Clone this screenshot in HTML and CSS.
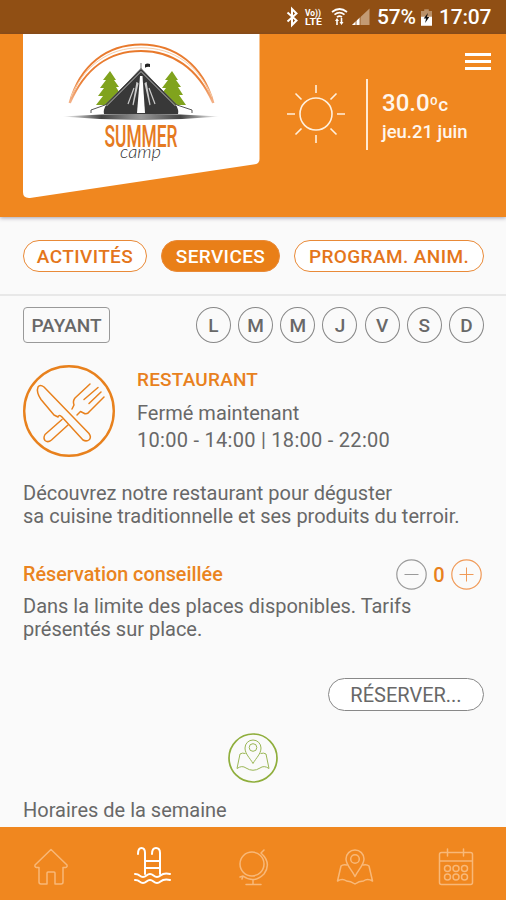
FILE: index.html
```
<!DOCTYPE html>
<html lang="fr">
<head>
    <meta charset="UTF-8">
    <meta name="viewport" content="width=device-width, initial-scale=1.0">
    <title>Summer Camp - Services</title>
    <link rel="stylesheet" href="styles.css">
</head>
<body>
    <div class="app">
        <div class="status">
            <svg class="status-icons" width="88" height="34" viewBox="0 0 88 34">
                <!-- bluetooth -->
                <path d="M2.500 12.500l9 8-4.500 4.500v-16l4.500 4.500-9 8" fill="none" stroke="#fff" stroke-width="2"/>
                <text class="tiny" x="20" y="16" textLength="16" lengthAdjust="spacingAndGlyphs">Vo))</text>
                <text class="tiny" x="20" y="25" textLength="17" lengthAdjust="spacingAndGlyphs">LTE</text>
                <!-- wifi -->
                <g fill="none" stroke="#fff" stroke-width="1.700">
                    <path d="M47 12q7.500-6 15 0"/>
                    <path d="M49.500 14.700q5-4 10 0"/>
                    <path d="M52 17.200q2.500-2 5 0"/>
                </g>
                <path d="M52 18l2 3h-1.200v4h-1.600v-4H50zM56.500 25l-2-3h1.200v-4h1.600v4h1.200z" fill="#fff"/>
                <!-- reseau -->
                <path d="M67 25L84.500 8.500V25z" fill="#c39b74"/>
                <path d="M67 25l8-7.500V25z" fill="#fff"/>
                <path d="M71 18v8M75 14v12" stroke="#904f14" stroke-width=".8"/>
            </svg>
            <span class="percent">57%</span>
            <svg class="battery" width="11" height="17" viewBox="0 0 12 18">
                <path d="M3.500 0h5v2H12v6H0V2h3.500z" fill="#b99068"/>
                <path d="M0 8h12v10H0z" fill="#fff"/>
                <path d="M7.500 4L3 10h2.500L4.500 15 9 8.500H6.500z" fill="#111"/>
            </svg>
            <span class="clock">17:07</span>
        </div>

        <div class="header">
            <svg class="logo" width="237" height="165" viewBox="23 34 237 165">
                <defs>
                    <linearGradient id="ground" x1="0" x2="1">
                        <stop offset="0" stop-color="#444" stop-opacity="0"/>
                        <stop offset=".25" stop-color="#444"/>
                        <stop offset=".5" stop-color="#999"/>
                        <stop offset=".75" stop-color="#444"/>
                        <stop offset="1" stop-color="#444" stop-opacity="0"/>
                    </linearGradient>
                    <linearGradient id="arc" x1="0" x2="0" y1="0" y2="1">
                        <stop offset="0" stop-color="#e8792b"/>
                        <stop offset=".6" stop-color="#ea8038"/>
                        <stop offset="1" stop-color="#f4b48c"/>
                    </linearGradient>
                    <path id="tree" d="M0 0L6 9 4 9 9 16 6 16 11 24 7 24 14 34H-14L-7 25-12 25-6 17-10 17-4 9-7 9z" fill="#80a31d"/>
                </defs>
                <path d="M23 34H259.500V159Q259.500 163.500 255 164.300L30 197.900Q23 198.500 23 192z" fill="#fff"/>
                <g fill="none" stroke="url(#arc)" stroke-width="1.900">
                    <path d="M69.500 103C80 65 107 44.500 141 44.500S203 65 213.500 103"/>
                    <path d="M70 103C85 68 110 51 141 51S198 68 213 103"/>
                </g>
                <path d="M71 97C84 66 108 47.700 141 47.700S199 66 212 97" fill="none" stroke="#f6cda9" stroke-width="1"/>
                <use href="#tree" x="110" y="71"/>
                <use href="#tree" x="172" y="71"/>
                <path d="M62 116.500Q141 111 220 116.500Q141 123.500 62 116.500z" fill="url(#ground)"/>
                <path d="M104 114Q103 110 106 105L141 68 176 105Q179 110 178 114z" fill="#383838"/>
                <path d="M91 113v-3L105 105 141 69l36 36 15 5v3" fill="none" stroke="#555" stroke-width="1"/>
                <path d="M106.500 106L141 71.500 175.500 106" fill="none" stroke="#ddd" stroke-width=".8"/>
                <path d="M140 76h2.500L145 113h-8z" fill="#fff"/>
                <path d="M137 82l-4 23 5-22M134 88l-6 16M146 82l4 23-5-22M149 88l6 16" fill="none" stroke="#ccc" stroke-width="1.200"/>
                <path d="M141 70v-7" stroke="#777" stroke-width="1"/>
                <path d="M145 64.500q2-1.500 5-.5v3q-3-.5-5 .7z" fill="#222"/>
                <text class="logo-name" x="104.500" y="146.500" textLength="73" lengthAdjust="spacingAndGlyphs">SUMMER</text>
                <text class="logo-sub" x="120" y="158" textLength="41" lengthAdjust="spacingAndGlyphs">camp</text>
            </svg>
            <svg class="sun" width="60" height="60" viewBox="-30 -30 60 60">
                <g fill="none" stroke="#fff0dd" stroke-width="1.600">
                    <circle r="16"/>
                    <path d="M0-29v8M0 29v-8M-29 0h8M29 0h-8M-20.500-20.500l6 6M20.500-20.500l-6 6M-20.500 20.500l6-6M20.500 20.500l-6-6"/>
                </g>
            </svg>
            <div class="weather">
                <div class="temp">30.0<small>ºc</small></div>
                <div class="date">jeu.21 juin</div>
            </div>
            <div class="burger"><i></i><i></i><i></i></div>
        </div>

        <div class="tabs">
            <a class="tab tab-1">ACTIVITÉS</a>
            <a class="tab tab-2 active">SERVICES</a>
            <a class="tab tab-3">PROGRAM. ANIM.</a>
        </div>

        <div class="content">
            <div class="row-days">
                <span class="badge">PAYANT</span>
                <div class="days">
                    <span>L</span>
                    <span>M</span>
                    <span>M</span>
                    <span>J</span>
                    <span>V</span>
                    <span>S</span>
                    <span>D</span>
                </div>
            </div>

            <div class="service">
                <svg width="92" height="92" viewBox="0 0 92 92" fill="none" stroke="#e8811d" stroke-width="1.500" stroke-linejoin="round" stroke-linecap="round">
                    <circle cx="46" cy="46" r="44.800" stroke-width="2.400"/>
                    <!-- couteau -->
                    <path d="M15 22Q17 19 21 22L66 68.500Q68.500 72 66.500 74.500 63.500 77 60 75L38.500 51.500Q35.500 49.500 35 52L31 50 18 34.500Q13 27 15 22z"/>
                    <!-- fourchette -->
                    <path d="M39 54.500L22 69.500Q20 73 22 75.500 25 78 28.500 75L45 60"/>
                    <path d="M67 19L52 33Q49.500 36 51 40L49 44M75 22.500L61 34.500M78 27L66 38.500M81 32L66.500 46.500Q64 50 60.500 48L57.500 46.500 54 50"/>
                </svg>
                <div class="service-text">
                    <h2>RESTAURANT</h2>
                    <p class="state">Fermé maintenant</p>
                    <p class="hours">10:00 - 14:00 | 18:00 - 22:00</p>
                </div>
            </div>

            <p class="desc">Découvrez notre restaurant pour déguster<br>sa cuisine traditionnelle et ses produits du terroir.</p>

            <div class="booking">
                <h3>Réservation conseillée</h3>
                <div class="counter">
                    <svg width="31" height="31" viewBox="0 0 31 31" fill="none" stroke="#9a9a9a">
                        <circle cx="15.500" cy="15.500" r="14.700" stroke-width="1.200"/>
                        <path d="M8.500 15.500h14"/>
                    </svg>
                    <b>0</b>
                    <svg width="31" height="31" viewBox="0 0 31 31" fill="none" stroke="#f09a58">
                        <circle cx="15.500" cy="15.500" r="14.700" stroke-width="1.200"/>
                        <path d="M8.500 15.500h14M15.500 8.500v14"/>
                    </svg>
                </div>
            </div>
            <p class="note">Dans la limite des places disponibles. Tarifs<br>présentés sur place.</p>

            <a class="reserve">RÉSERVER...</a>

            <svg class="map" width="50" height="50" viewBox="0 0 50 50" fill="none" stroke="#9ab655" stroke-linejoin="round">
                <circle cx="25" cy="25" r="24" stroke="#8fae3c" stroke-width="1.700"/>
                <g transform="translate(7 5)">
                    <path d="M18 25.500C15 20 10 16 10 10a8 8 0 0 1 16 0c0 6-5 10-8 15.500z"/>
                    <circle cx="18" cy="9.500" r="3.800"/>
                    <path d="M10.500 15.500Q7 14.500 5 16L2 30.500Q7 27 11 30q7 4.500 14 0 4-3 9 .5L31 16q-2-1.500-5.500-.5"/>
                </g>
            </svg>

            <p class="week">Horaires de la semaine</p>
        </div>

        <div class="nav">
            <a>
                <svg width="38" height="40" viewBox="0 0 38 40">
                    <path d="M19 2.500L3 18q-1 3 4 2.500V35q0 2 2 2h6V26q0-1 1-1h6q1 0 1 1v11h6q2 0 2-2V20.500q5 .5 4-2.500z"/>
                </svg>
            </a>
            <a class="current">
                <svg width="38" height="40" viewBox="0 0 38 40">
                    <path d="M5 7q0-6 3.500-6T12 6v21M19 7q0-6 4-6t4 5v21M12 14h15M12 21h15M2 27q3 0 4.500 1.500 3.500 3 7 0t7 0 7 0T37 27M2 33q3 0 4.500 1.500 3.500 3 7 0t7 0 7 0T37 33"/>
                </svg>
            </a>
            <a>
                <svg width="38" height="40" viewBox="0 0 38 40">
                    <circle cx="17" cy="17" r="12"/>
                    <path d="M29 3l-3 3Q37 16 29 27 19 37 8 29l-3 1M8 29l-1 3M18 33v4M11 37.500h15"/>
                </svg>
            </a>
            <a>
                <svg width="38" height="40" viewBox="0 0 38 40">
                    <path d="M19 29.500C16 23 10 18 10 12a9 9 0 0 1 18 0C28 18 22 23 19 29.500z"/>
                    <circle cx="19" cy="12" r="4.300"/>
                    <path d="M11 18q-4-1-6 1L1.500 34q5-3 9 0 4 0 8.500 3 4-3 8.500-3 4-3 9 0L33 19q-2-2-6-1"/>
                </svg>
            </a>
            <a>
                <svg width="38" height="40" viewBox="0 0 38 40">
                    <rect x="2.500" y="5.500" width="33" height="32" rx="2"/>
                    <path d="M3 14h32M10.500 2v7M26.500 2v7"/>
                    <g>
                        <circle cx="10.500" cy="21.500" r="3"/>
                        <circle cx="19" cy="21.500" r="3"/>
                        <circle cx="27.500" cy="21.500" r="3"/>
                        <circle cx="10.500" cy="30" r="3"/>
                        <circle cx="19" cy="30" r="3"/>
                        <circle cx="27.500" cy="30" r="3"/>
                    </g>
                </svg>
            </a>
        </div>
    </div>
</body>
</html>
```
FILE: styles.css
```
* {
    box-sizing: border-box;
}
body {
    margin: 0;
    font-family: Roboto, "Liberation Sans", sans-serif;
    font-size: 20px;
    color: #686868;
    background-color: #fafafa;
}
h2, h3, p {
    margin: 0;
}
svg {
    display: block;
    flex: none;
}
.app {
    width: 506px;
    height: 900px;
    display: flex;
    flex-direction: column;
    overflow: hidden;
}

/* barre de statut */
.status {
    height: 34px;
    flex: none;
    display: flex;
    align-items: center;
    padding-left: 285px;
    background-color: #904f14;
    color: #fff;
    font-size: 21px;
    font-weight: 500;
    white-space: nowrap;
}
.tiny {
    font-size: 9px;
    font-weight: 700;
    fill: #fff;
}
.percent {
    width: 43px;
    margin-left: 4px;
    letter-spacing: -0.2px;
}
.battery {
    margin-left: 1px;
}
.clock {
    margin-left: 7px;
    letter-spacing: -0.2px;
}

/* entete */
.header {
    height: 183px;
    flex: none;
    display: flex;
    align-items: flex-start;
    padding-left: 23px;
    background-color: #f0871f;
    color: #fff6ec;
    box-shadow: 0 1px 4px rgba(60, 50, 80, 0.45);
}
.logo-name {
    font-size: 32px;
    font-weight: 500;
    fill: #e57a22;
}
.logo-sub {
    font-family: Lato, "Liberation Sans", sans-serif;
    font-size: 18px;
    font-style: italic;
    font-weight: 300;
    fill: #333;
}
.sun {
    margin: 50px 0 0 26px;
}
.weather {
    height: 71px;
    width: 100px;
    margin: 45px 0 0 20px;
    padding: 10px 0 0 14px;
    border-left: 2px solid #ffe9d2;
    font-weight: 500;
    white-space: nowrap;
}
.temp {
    font-size: 24px;
    line-height: 28px;
}
.temp small {
    font-size: 19px;
}
.date {
    font-size: 18.5px;
    line-height: 27px;
}
.burger {
    margin: 19px 0 0 -1px;
    width: 26px;
    display: flex;
    flex-direction: column;
    gap: 4px;
}
.burger i {
    height: 3px;
    background-color: #fff;
}

/* onglets */
.tabs {
    height: 79px;
    flex: none;
    display: flex;
    padding: 23px 22px 0 23px;
    justify-content: space-between;
    border-bottom: 2px solid #e8e8e8;
}
.tab {
    height: 32px;
    line-height: 32px;
    border: 1px solid #e98a38;
    border-radius: 16px;
    background-color: #fff;
    color: #e4761b;
    font-size: 19px;
    font-weight: 500;
    letter-spacing: 0.4px;
    text-align: center;
    white-space: nowrap;
}
.tab-1 {width: 124px;}
.tab-2 {width: 119px;}
.tab-3 {width: 190px;}
.tab.active {
    background-color: #e97f18;
    color: #fff;
}

.content {
    flex: 1;
    min-height: 0;
    display: flex;
    flex-direction: column;
    padding: 11px 22px 0 23px;
}
.row-days {
    display: flex;
    justify-content: space-between;
    font-size: 19px;
    font-weight: 500;
}
.badge {
    width: 87px;
    height: 36px;
    line-height: 36px;
    border: 1.5px solid #999;
    border-radius: 4px;
    text-align: center;
}
.days {
    width: 288px;
    display: flex;
    justify-content: space-between;
}
.days span {
    width: 35px;
    height: 36px;
    line-height: 36px;
    border: 1px solid #888;
    border-radius: 50%;
    text-align: center;
}

.service {
    display: flex;
    margin-top: 22px;
}
.service-text {
    margin-left: 22px;
    white-space: nowrap;
}
h2 {
    font-size: 19px;
    font-weight: 500;
    line-height: 30px;
    letter-spacing: 0.2px;
    color: #e8811d;
}
.state {
    line-height: 27px;
    margin-top: 5px;
}
.hours {
    line-height: 27px;
    letter-spacing: 0.28px;
}
.desc {
    margin-top: 25px;
    line-height: 23px;
    white-space: nowrap;
}
.booking {
    display: flex;
    justify-content: space-between;
    align-items: center;
    height: 31px;
    margin-top: 31px;
}
h3 {
    font-size: 19.8px;
    font-weight: 500;
    color: #ea8420;
}
.counter {
    display: flex;
    align-items: center;
    margin-right: 2px;
}
.counter b {
    width: 24px;
    text-align: center;
    font-weight: 500;
    color: #e8811d;
}
.note {
    margin-top: 5px;
    line-height: 23px;
    white-space: nowrap;
}
.reserve {
    align-self: flex-end;
    width: 156px;
    height: 33px;
    line-height: 33px;
    margin-top: 37px;
    border: 1px solid #888;
    border-radius: 17px;
    background-color: #fff;
    text-align: center;
}
.map {
    margin: 22px 0 0 205px;
}
.week {
    margin-top: 16px;
    line-height: 23px;
}

/* menu du bas */
.nav {
    height: 73px;
    flex: none;
    display: flex;
    justify-content: space-between;
    padding: 20px 31px 0 32px;
    background-color: #f0871f;
}
.nav svg {
    fill: none;
    stroke: #f8b878;
    stroke-width: 1.5;
    stroke-linejoin: round;
    stroke-linecap: round;
}
.nav .current svg {
    stroke: #fff;
    stroke-width: 2;
}
```
